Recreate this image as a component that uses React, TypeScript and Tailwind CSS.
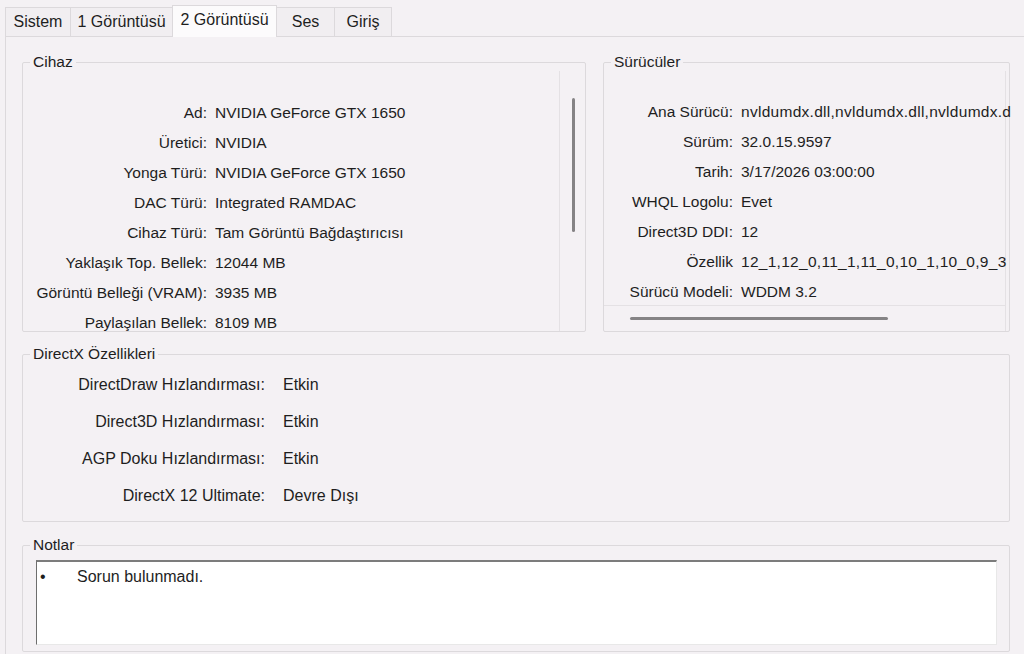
import React from "react";

const cihaz: [string, string][] = [
  ["Ad:", "NVIDIA GeForce GTX 1650"],
  ["Üretici:", "NVIDIA"],
  ["Yonga Türü:", "NVIDIA GeForce GTX 1650"],
  ["DAC Türü:", "Integrated RAMDAC"],
  ["Cihaz Türü:", "Tam Görüntü Bağdaştırıcısı"],
  ["Yaklaşık Top. Bellek:", "12044 MB"],
  ["Görüntü Belleği (VRAM):", "3935 MB"],
  ["Paylaşılan Bellek:", "8109 MB"],
];

const surucu: [string, string, string][] = [
  ["Ana Sürücü:", "nvldumdx.dll,nvldumdx.dll,nvldumdx.d", "tracking-[0.28px]"],
  ["Sürüm:", "32.0.15.9597", ""],
  ["Tarih:", "3/17/2026 03:00:00", ""],
  ["WHQL Logolu:", "Evet", ""],
  ["Direct3D DDI:", "12", ""],
  ["Özellik", "12_1,12_0,11_1,11_0,10_1,10_0,9_3", "tracking-[0.28px]"],
  ["Sürücü Modeli:", "WDDM 3.2", ""],
];

const dx: [string, string][] = [
  ["DirectDraw Hızlandırması:", "Etkin"],
  ["Direct3D Hızlandırması:", "Etkin"],
  ["AGP Doku Hızlandırması:", "Etkin"],
  ["DirectX 12 Ultimate:", "Devre Dışı"],
];

export default function App() {
  return (
    <div className="w-[1024px] h-[654px] overflow-hidden bg-[#f4f1f4] text-[#1e1e1e] font-['Liberation_Sans',Arial,sans-serif]">
      {/* Tabs */}
      <div className="flex items-end h-[36px] pl-[5px] text-[16px]">
        <div className="h-[29px] w-[65px] flex items-center justify-center border-t border-l border-[#dcd9dc] bg-[#f1eef1]">
          Sistem
        </div>
        <div className="h-[29px] w-[102px] flex items-center justify-center border-t border-l border-[#dcd9dc] bg-[#f1eef1]">
          1 Görüntüsü
        </div>
        <div className="relative -mb-px h-[32px] w-[105px] flex items-center justify-center pb-[3px] border-t border-l border-r border-[#dcd9dc] bg-[#fcfbfc]">
          2 Görüntüsü
        </div>
        <div className="h-[29px] w-[58px] flex items-center justify-center border-t border-r border-[#dcd9dc] bg-[#f1eef1]">
          Ses
        </div>
        <div className="h-[29px] w-[57px] flex items-center justify-center border-t border-r border-[#dcd9dc] bg-[#f1eef1]">
          Giriş
        </div>
      </div>

      {/* Page */}
      <div className="ml-[5px] h-[640px] border-l border-t border-[#dcd9dc] pl-[16px] pt-[16px]">
        <div className="flex gap-[17px]">
          {/* Cihaz */}
          <fieldset className="w-[564px] h-[279px] border border-[#dcd9dc] rounded-[2px] min-w-0">
            <legend className="ml-[7px] px-[3px] leading-[18px] text-[15.5px]">Cihaz</legend>
            <div className="flex h-full overflow-hidden">
              <div className="flex-1 pt-[27px] text-[15.5px] overflow-hidden">
                {cihaz.map(([k, v]) => (
                  <div key={k} className="grid grid-cols-[184px_1fr] gap-x-[8px] h-[30px] items-center whitespace-nowrap">
                    <span className="text-right">{k}</span>
                    <span>{v}</span>
                  </div>
                ))}
              </div>
              <div className="w-[26px] border-l border-[#e4e1e4] shrink-0">
                <div className="ml-[12px] mt-[27px] w-[3px] h-[134px] rounded-full bg-[#858385]" />
              </div>
            </div>
          </fieldset>

          {/* Sürücüler */}
          <fieldset className="w-[407px] h-[279px] border border-[#dcd9dc] rounded-[2px] min-w-0">
            <legend className="ml-[7px] px-[3px] leading-[18px] text-[15.5px]">Sürücüler</legend>
            <div className="flex flex-col h-full mr-[3px] border-r border-[#e4e1e4]">
              <div className="h-[234px] pt-[26px] text-[15.5px]">
                {surucu.map(([k, v, t]) => (
                  <div key={k} className="grid grid-cols-[129px_1fr] gap-x-[8px] h-[30px] items-center whitespace-nowrap">
                    <span className="text-right">{k}</span>
                    <span className={t}>{v}</span>
                  </div>
                ))}
              </div>
              <div className="flex-1 border-t border-[#e4e1e4]">
                <div className="ml-[26px] mt-[11px] w-[258px] h-[3px] rounded-full bg-[#858385]" />
              </div>
            </div>
          </fieldset>
        </div>

        {/* DirectX Özellikleri */}
        <fieldset className="mt-[13px] w-[988px] h-[177px] border border-[#dcd9dc] rounded-[2px]">
          <legend className="ml-[7px] px-[3px] leading-[18px] text-[15.5px]">DirectX Özellikleri</legend>
          <div className="pt-[3.5px] text-[16px]">
            {dx.map(([k, v]) => (
              <div key={k} className="grid grid-cols-[242px_1fr] gap-x-[18px] h-[37px] items-center whitespace-nowrap">
                <span className="text-right">{k}</span>
                <span>{v}</span>
              </div>
            ))}
          </div>
        </fieldset>

        {/* Notlar */}
        <fieldset className="mt-[14px] w-[988px] h-[116px] border border-[#dcd9dc] rounded-[2px]">
          <legend className="ml-[7px] px-[3px] leading-[18px] text-[15.5px]">Notlar</legend>
          <div className="ml-[13px] mt-[6px] w-[961px] h-[85px] bg-white border-t-2 border-l border-t-[#7c7c7c] border-l-[#6e6e6e] border-r border-b border-r-[#e8e8e8] border-b-[#e8e8e8] text-[16px]">
            <div className="flex items-center h-[30px]">
              <span className="w-[40px] pl-[3px]">•</span>
              <span>Sorun bulunmadı.</span>
            </div>
          </div>
        </fieldset>
      </div>
    </div>
  );
}
